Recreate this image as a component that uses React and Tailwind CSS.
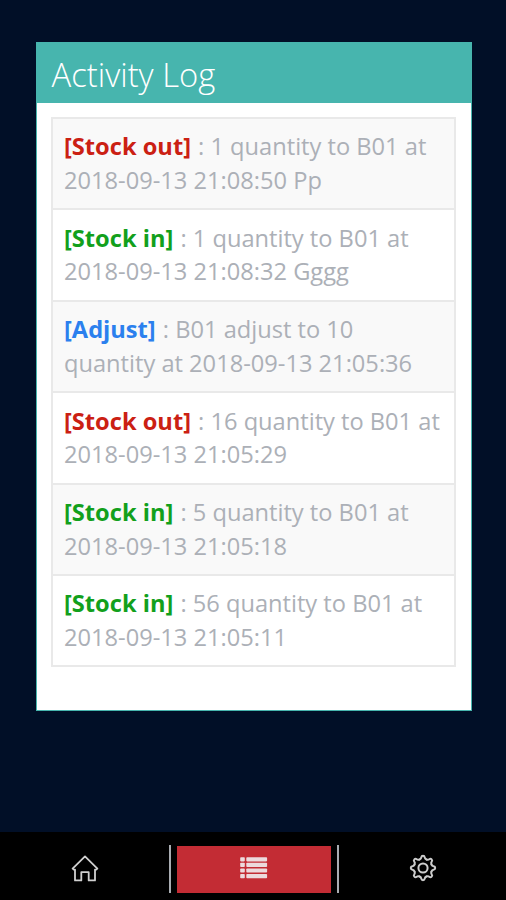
import React, { useState } from 'react';

const logs = [
  { id: 1, type: 'Stock out', text: '1 quantity to B01 at 2018-09-13 21:08:50 Pp' },
  { id: 2, type: 'Stock in', text: '1 quantity to B01 at 2018-09-13 21:08:32 Gggg' },
  { id: 3, type: 'Adjust', text: 'B01 adjust to 10 quantity at 2018-09-13 21:05:36' },
  { id: 4, type: 'Stock out', text: '16 quantity to B01 at 2018-09-13 21:05:29' },
  { id: 5, type: 'Stock in', text: '5 quantity to B01 at 2018-09-13 21:05:18' },
  { id: 6, type: 'Stock in', text: '56 quantity to B01 at 2018-09-13 21:05:11' },
];

const typeColors = {
  'Stock out': 'text-[#cb2013]',
  'Stock in': 'text-[#12a01c]',
  'Adjust': 'text-[#2b80ee]',
};

const HomeIcon = () => (
  <svg className="w-7 h-7" viewBox="0 0 28 28" fill="none" stroke="#d0d0d0" strokeWidth="1.8" strokeLinejoin="round" strokeLinecap="round">
    <path d="M1.6 14.6 L14 2.4 L26.4 14.6 L25.2 15.6 H24 V26.4 H17.7 V18.2 H10.3 V26.4 H4 V15.6 H2.8 Z" />
  </svg>
);

const ListIcon = () => (
  <svg className="w-7 h-[22px]" viewBox="0 0 28 22" fill="#ecdadd">
    {[0, 5.6, 11.2, 16.8].map((y) => (
      <g key={y}>
        <rect x="0.2" y={y + 0.2} width="4.6" height="4.2" rx="0.8" />
        <rect x="6.3" y={y + 0.2} width="20.8" height="4.2" rx="0.8" />
      </g>
    ))}
  </svg>
);

// one tooth of the gear, repeated every 45 degrees
const GearIcon = () => (
  <svg className="w-7 h-7" viewBox="0 0 28 28" fill="none" stroke="#cccccc" strokeWidth="2" strokeLinejoin="round" strokeLinecap="round">
    {[0, 45, 90, 135, 180, 225, 270, 315].map((deg) => (
      <path key={deg} transform={`rotate(${deg} 14 14)`} d="M10.5 5.5 Q12.1 5 12.3 3.4 Q12.5 1.8 14 1.8 Q15.5 1.8 15.7 3.4 Q15.9 5 17.5 5.5" />
    ))}
    <circle cx="14" cy="14" r="4.6" />
  </svg>
);

const App = () => {
  const [tab, setTab] = useState('log');

  const tabs = [
    { id: 'home', icon: <HomeIcon />, style: 'w-[169px] pl-px' },
    { id: 'log', icon: <ListIcon />, style: 'w-[170px] px-1.5 border-x-2 border-[#a9adb2]' },
    { id: 'settings', icon: <GearIcon />, style: 'w-[167px]' },
  ];

  return (
    <div className="h-screen flex flex-col bg-[#010f27] font-['Open_Sans',sans-serif] overflow-hidden">
      {/* Log panel */}
      <div className="flex-1 pt-[42px] pl-9 pr-[34px]">
        <div className="h-[669px] bg-white border border-[#47b5ae]">
          <h1 className="h-[60px] pl-[14.5px] bg-[#47b5ae] text-white text-[32.8px] leading-[64px] font-light">
            Activity Log
          </h1>

          <ul className="mt-3.5 ml-3.5 mr-[15px] border-x-2 border-t-2 border-[#e9e9e9]">
            {logs.map((log, i) => (
              <li
                key={log.id}
                className={`h-[91.4px] pl-[11px] pr-2 pt-[11.4px] border-b-2 border-[#e9e9e9] text-[23.65px] leading-[33.7px] text-[#acb0b7] ${i % 2 === 0 && i < 5 ? 'bg-[#f9f9f9]' : 'bg-white'}`}
              >
                <span className={`font-bold pr-px ${typeColors[log.type]}`}>{`[${log.type}]`}</span>
                {` : ${log.text}`}
              </li>
            ))}
          </ul>
        </div>
      </div>

      {/* Bottom navigation */}
      <nav className="h-[68px] bg-black flex items-center pt-1.5">
        {tabs.map((t) => (
          <button
            key={t.id}
            type="button"
            aria-label={t.id}
            onClick={() => setTab(t.id)}
            className={`h-12 flex items-center justify-center ${t.style}`}
          >
            <span className={`h-[47px] w-full flex items-center justify-center pb-0.5 ${tab === t.id ? 'bg-[#c32c34]' : ''}`}>
              {t.icon}
            </span>
          </button>
        ))}
      </nav>
    </div>
  );
};

export default App;
